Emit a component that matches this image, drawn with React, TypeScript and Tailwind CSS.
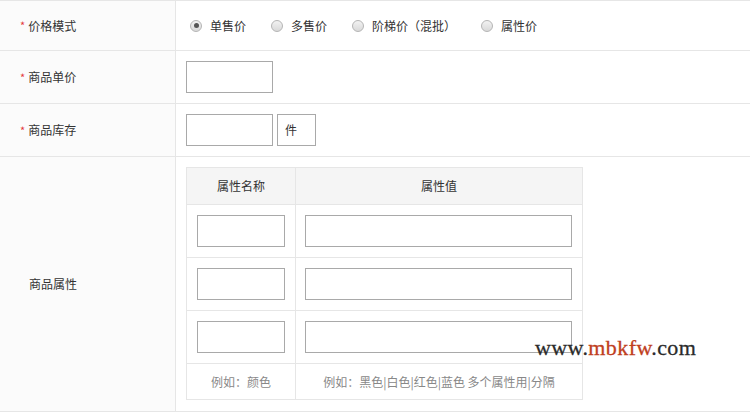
import React from "react";

const font = { fontFamily: '"Noto Sans CJK SC", "Noto Sans", sans-serif' };

function Radio({ checked, label }: { checked?: boolean; label: string }) {
    return (
        <label className="flex items-center gap-2 cursor-pointer">
            <span className="w-3 h-3 rounded-full border border-[#b5b5b5] bg-gradient-to-b from-[#f2f2f2] to-[#d9d9d9] flex items-center justify-center">
                {checked && <span className="w-[5px] h-[5px] rounded-full bg-[#555]" />}
            </span>
            <span>{label}</span>
        </label>
    );
}

function Label({ text, required }: { text: string; required?: boolean }) {
    return (
        <div className="w-[176px] shrink-0 bg-[#fbfbfb] border-r border-[#e6e6e6] flex items-center pl-[20px]">
            {required ? <span className="text-[#e4393c] mr-[3px] text-[11px]">*</span> : <span className="mr-[9px]" />}
            <span>{text}</span>
        </div>
    );
}

export default function App() {
    const rows = [0, 1, 2];
    return (
        <div className="w-[750px] h-[415px] bg-white text-[12px] text-[#333] relative overflow-hidden" style={font}>
            <div className="border-t border-[#e6e6e6]">
                <div className="flex h-[50px] border-b border-[#e6e6e6]">
                    <Label text="价格模式" required />
                    <div className="flex items-center pl-[14px] gap-[25px]">
                        <Radio checked label="单售价" />
                        <Radio label="多售价" />
                        <Radio label="阶梯价（混批）" />
                        <Radio label="属性价" />
                    </div>
                </div>

                <div className="flex h-[53px] border-b border-[#e6e6e6]">
                    <Label text="商品单价" required />
                    <div className="pl-[10px] pt-[10px]">
                        <input className="w-[87px] h-[32px] border border-[#a9a9a9] outline-none px-2" />
                    </div>
                </div>

                <div className="flex h-[53px] border-b border-[#e6e6e6]">
                    <Label text="商品库存" required />
                    <div className="pl-[10px] pt-[10px] flex gap-[4px]">
                        <input className="w-[87px] h-[32px] border border-[#a9a9a9] outline-none px-2" />
                        <div className="w-[39px] h-[32px] border border-[#a9a9a9] flex items-center pl-[7px]">件</div>
                    </div>
                </div>

                <div className="flex h-[255px] border-b border-[#e6e6e6]">
                    <Label text="商品属性" />
                    <div className="pl-[10px] pt-[10px]">
                        <div className="w-[397px] border border-[#e6e6e6]">
                            <div className="flex h-[37px] bg-[#f5f5f5] border-b border-[#e6e6e6]">
                                <div className="w-[109px] border-r border-[#e6e6e6] flex items-center justify-center">属性名称</div>
                                <div className="flex-1 flex items-center justify-center">属性值</div>
                            </div>
                            {rows.map((r) => (
                                <div key={r} className="flex h-[53px] border-b border-[#e6e6e6]">
                                    <div className="w-[109px] border-r border-[#e6e6e6] pl-[10px] pt-[10px]">
                                        <input className="w-[88px] h-[32px] border border-[#a9a9a9] outline-none px-2" />
                                    </div>
                                    <div className="flex-1 pl-[9px] pt-[10px]">
                                        <input className="w-[267px] h-[32px] border border-[#a9a9a9] outline-none px-2" />
                                    </div>
                                </div>
                            ))}
                            <div className="flex h-[35px] text-[#888]">
                                <div className="w-[109px] border-r border-[#e6e6e6] flex items-center justify-center">例如：颜色</div>
                                <div className="flex-1 flex items-center justify-center">例如：黑色|白色|红色|蓝色 多个属性用|分隔</div>
                            </div>
                        </div>
                    </div>
                </div>
            </div>

            <div
                className="absolute left-[535px] top-[337px] text-[22px] leading-none text-[#2b2b2b] tracking-[0.4px]"
                style={{ fontFamily: '"Liberation Serif", serif', WebkitTextStroke: "0.3px currentColor" }}
            >
                www.<span className="text-[#c0401e]">mbkfw</span>.com
            </div>
        </div>
    );
}
